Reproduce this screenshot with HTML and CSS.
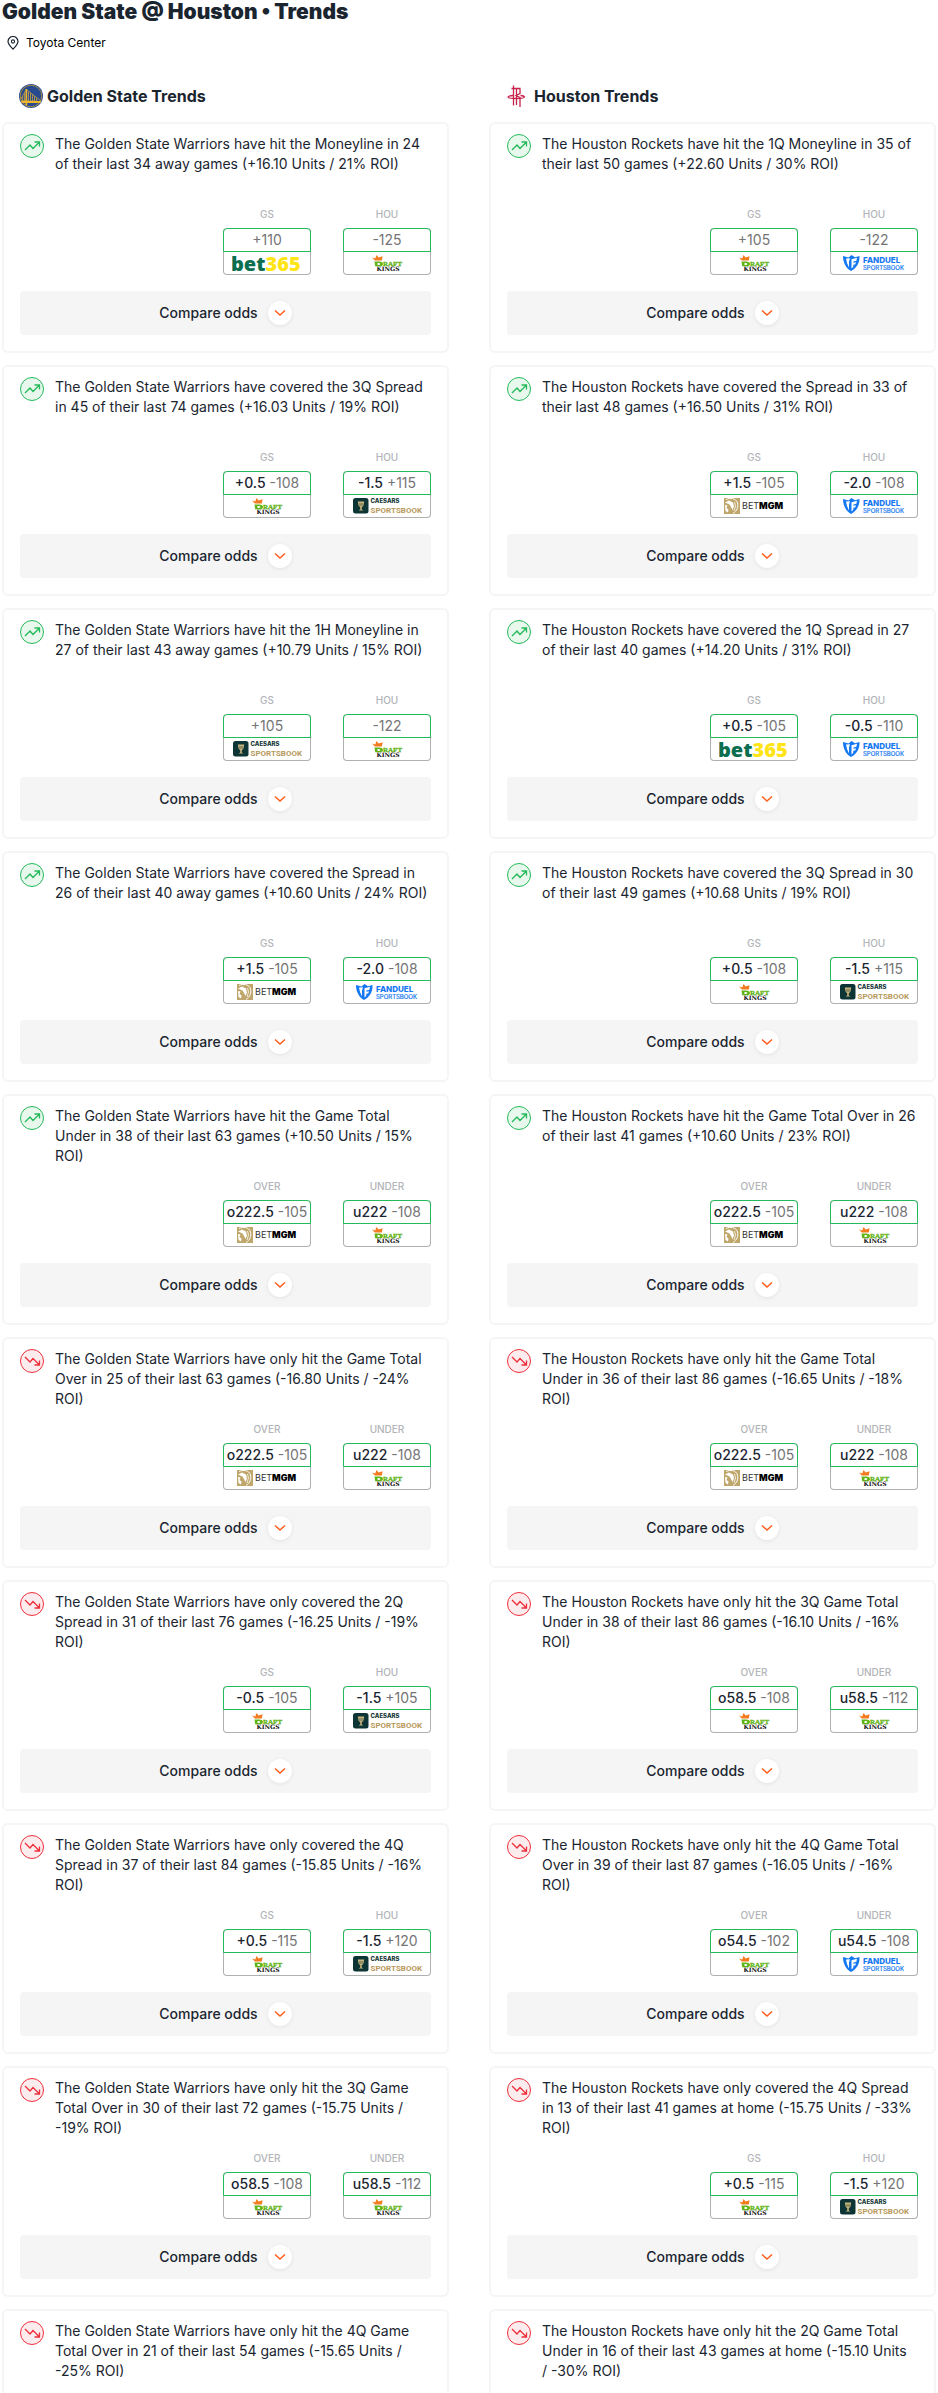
FILE: index.html
```html
<!DOCTYPE html>
<html lang="en">
<head>
<meta charset="utf-8">
<meta name="viewport" content="width=device-width, initial-scale=1">
<title>Golden State @ Houston • Trends</title>
<link rel="stylesheet" href="styles.css">
</head>
<body>
<svg class="sprite" aria-hidden="true">
  <symbol id="up" viewBox="0 0 24 24"><circle cx="12" cy="12" r="11.5" fill="#e8f8ed" stroke="#24b95a"/><path d="M5 16l5-5 3 3.500L19.500 8M14.500 8H19.500V12.500" fill="none" stroke="#24b95a" stroke-width="1.300"/></symbol>
  <symbol id="down" viewBox="0 0 24 24"><circle cx="12" cy="12" r="11.500" fill="#fdecee" stroke="#ec2f3b"/><path d="M5 8l5 5 3-3.500L19.500 16M14.500 16H19.500V11.500" fill="none" stroke="#ec2f3b" stroke-width="1.300"/></symbol>
  <symbol id="chev" viewBox="0 0 12 8"><path d="M1 1.500l5 4.500 5-4.500" fill="none" stroke="#ff5c1a" stroke-width="1.500"/></symbol>
  <symbol id="bet365" viewBox="0 0 70 16"><text x="-1" y="15.500" font-family="Open Sans" font-weight="800" font-size="20" fill="#0b6e4f">bet<tspan fill="#ffe418">365</tspan></text></symbol>
  <symbol id="dk" viewBox="0 0 31 16"><path d="M0 2.500l3.200 1L4.600 0l2 2.500 4-1.300-.8 4.300H2.800z" fill="#f47a1f"/><path d="M2.500 6.500H7c2.800 0 4 1 4 2.500S9.500 11.300 7 11.300H3.200zM5.500 8v2c2 0 2.800-.3 2.800-1S7.500 8 5.500 8z" fill="#5fb416" fill-rule="evenodd"/><text x="11" y="10.800" font-family="Liberation Serif" font-weight="700" font-size="7" fill="#5fb416" stroke="#5fb416" stroke-width=".3">RAFT</text><text x="4.500" y="16" font-family="DejaVu Serif" font-weight="700" font-size="6" fill="#111">KINGS</text></symbol>
  <symbol id="caesars" viewBox="0 0 69 16"><rect width="15.500" height="15.500" rx="2.500" fill="#0d3535"/><path d="M4.800 3.500h6.400l-.8 4.200-1.600 1.500v2.300l1.700 1H5.500l1.700-1V9.200L5.600 7.700z" fill="#c9b57c"/><path d="M7 5v3M9 5v3" stroke="#0d3535" stroke-width=".6"/><text x="17.500" y="5" font-family="Inter" font-weight="800" font-size="6" fill="#143636">CAESARS</text><text x="17.500" y="14.500" font-family="Roboto" font-weight="700" font-size="8" fill="#b89a5c">SPORTSBOOK</text></symbol>
  <symbol id="betmgm" viewBox="0 0 60 16"><rect width="16" height="16" fill="#bfa66a"/><path d="M2 1.500C6-.5 12 0 13.500 5c1 4-.5 8-4.500 10.500" fill="none" stroke="#fff" stroke-width="1"/><path d="M1 4.500L5 2.500l4 2 1 4-1.500 3.500L7 9 5.500 6.500zM1 7l2.500.5-1 2.500 2 1.500-.5 3L1.500 13z" fill="#fff"/><path d="M10.500 4l1 4-1.500 5" fill="none" stroke="#fff" stroke-width=".8"/><text x="18" y="11" font-family="Inter" font-size="9" fill="#333">BET<tspan font-weight="900" fill="#000">MGM</tspan></text></symbol>
  <symbol id="fanduel" viewBox="0 0 62 16"><path d="M0 1l5.500 1.500L8.500 0l3.500 2.200 4.500-1.300c.4 6.300-2.500 12-8.500 15C2.500 13 0 7 0 1z" fill="#1478f2"/><path d="M3 3.500l4-.3-1 3.300v6L4 8zM8.500 4.200l5.500-1.400-.6 2.900-3 .7v1.300l2.600-.5-.8 2.300h-1.700l-.4 2.500-1.600 1.500z" fill="#fff"/><text x="20" y="7.800" font-family="Inter" font-weight="800" font-size="8" fill="#1478f2">FANDUEL</text><text x="20" y="14.500" font-family="Inter" font-size="6" fill="#1478f2" stroke="#1478f2" stroke-width=".2">SPORTSBOOK</text></symbol>
</svg>
<main class="page">
  <h1 class="title">Golden State @ Houston • Trends</h1>
  <p class="venue">
    <svg class="pin" viewBox="0 0 12 14" aria-hidden="true"><path d="M6 13.200C3 10.200 1 8 1 5.500a5 5 0 0 1 10 0c0 2.500-2 4.700-5 7.700z" fill="none" stroke="#1a2530" stroke-width="1.200"/><circle cx="6" cy="5.500" r="1.600" fill="none" stroke="#1a2530" stroke-width="1.100"/></svg>
    Toyota Center
  </p>
  <div class="columns">
    <section class="column">
      <h2 class="team">
        <svg class="team-logo" viewBox="0 0 24 24" aria-hidden="true"><circle cx="12" cy="12" r="12" fill="#26498f"/><circle cx="12" cy="12" r="10.800" fill="none" stroke="#c9a03a" stroke-width=".8"/><path d="M7.300 5.500L22 17M7.300 5.500L2 15M9.500 7.500V18M11.500 9V18M13.500 10.500V18M15.500 12V18M17.500 14v4M5.500 9V18M3.700 12V18" stroke="#c79f3d" stroke-width=".8" fill="none"/><path d="M6.500 5h1.700v16.500H6.500zM2 16.500l20 .5-.5 2H2.500z" fill="#ecb52e"/></svg>
        Golden State Trends
      </h2>
      <article class="card"><div class="trend"><svg class="mark"><use href="#up"/></svg><p>The Golden State Warriors have hit the Moneyline in 24 of their last 34 away games (+16.10 Units / 21% ROI)</p></div>
        <div class="odds"><div class="odd"><span class="side">GS</span><a class="price" href="#"><span class="line"><i>+110</i></span><svg class="book w70" role="img" aria-label="bet365"><use href="#bet365"/></svg></a></div><div class="odd"><span class="side">HOU</span><a class="price" href="#"><span class="line"><i>-125</i></span><svg class="book w31" role="img" aria-label="DraftKings"><use href="#dk"/></svg></a></div></div>
        <button class="compare" type="button">Compare odds<span class="round"><svg class="chev"><use href="#chev"/></svg></span></button></article>
      <article class="card"><div class="trend"><svg class="mark"><use href="#up"/></svg><p>The Golden State Warriors have covered the 3Q Spread in 45 of their last 74 games (+16.03 Units / 19% ROI)</p></div>
        <div class="odds"><div class="odd"><span class="side">GS</span><a class="price" href="#"><span class="line"><b>+0.5</b> <i>-108</i></span><svg class="book w31" role="img" aria-label="DraftKings"><use href="#dk"/></svg></a></div><div class="odd"><span class="side">HOU</span><a class="price" href="#"><span class="line"><b>-1.5</b> <i>+115</i></span><svg class="book w69" role="img" aria-label="Caesars"><use href="#caesars"/></svg></a></div></div>
        <button class="compare" type="button">Compare odds<span class="round"><svg class="chev"><use href="#chev"/></svg></span></button></article>
      <article class="card"><div class="trend"><svg class="mark"><use href="#up"/></svg><p>The Golden State Warriors have hit the 1H Moneyline in 27 of their last 43 away games (+10.79 Units / 15% ROI)</p></div>
        <div class="odds"><div class="odd"><span class="side">GS</span><a class="price" href="#"><span class="line"><i>+105</i></span><svg class="book w69" role="img" aria-label="Caesars"><use href="#caesars"/></svg></a></div><div class="odd"><span class="side">HOU</span><a class="price" href="#"><span class="line"><i>-122</i></span><svg class="book w31" role="img" aria-label="DraftKings"><use href="#dk"/></svg></a></div></div>
        <button class="compare" type="button">Compare odds<span class="round"><svg class="chev"><use href="#chev"/></svg></span></button></article>
      <article class="card"><div class="trend"><svg class="mark"><use href="#up"/></svg><p>The Golden State Warriors have covered the Spread in 26 of their last 40 away games (+10.60 Units / 24% ROI)</p></div>
        <div class="odds"><div class="odd"><span class="side">GS</span><a class="price" href="#"><span class="line"><b>+1.5</b> <i>-105</i></span><svg class="book w60" role="img" aria-label="BetMGM"><use href="#betmgm"/></svg></a></div><div class="odd"><span class="side">HOU</span><a class="price" href="#"><span class="line"><b>-2.0</b> <i>-108</i></span><svg class="book w62" role="img" aria-label="FanDuel"><use href="#fanduel"/></svg></a></div></div>
        <button class="compare" type="button">Compare odds<span class="round"><svg class="chev"><use href="#chev"/></svg></span></button></article>
      <article class="card"><div class="trend"><svg class="mark"><use href="#up"/></svg><p>The Golden State Warriors have hit the Game Total Under in 38 of their last 63 games (+10.50 Units / 15% ROI)</p></div>
        <div class="odds"><div class="odd"><span class="side">OVER</span><a class="price" href="#"><span class="line"><b>o222.5</b> <i>-105</i></span><svg class="book w60" role="img" aria-label="BetMGM"><use href="#betmgm"/></svg></a></div><div class="odd"><span class="side">UNDER</span><a class="price" href="#"><span class="line"><b>u222</b> <i>-108</i></span><svg class="book w31" role="img" aria-label="DraftKings"><use href="#dk"/></svg></a></div></div>
        <button class="compare" type="button">Compare odds<span class="round"><svg class="chev"><use href="#chev"/></svg></span></button></article>
      <article class="card"><div class="trend"><svg class="mark"><use href="#down"/></svg><p>The Golden State Warriors have only hit the Game Total Over in 25 of their last 63 games (-16.80 Units / -24% ROI)</p></div>
        <div class="odds"><div class="odd"><span class="side">OVER</span><a class="price" href="#"><span class="line"><b>o222.5</b> <i>-105</i></span><svg class="book w60" role="img" aria-label="BetMGM"><use href="#betmgm"/></svg></a></div><div class="odd"><span class="side">UNDER</span><a class="price" href="#"><span class="line"><b>u222</b> <i>-108</i></span><svg class="book w31" role="img" aria-label="DraftKings"><use href="#dk"/></svg></a></div></div>
        <button class="compare" type="button">Compare odds<span class="round"><svg class="chev"><use href="#chev"/></svg></span></button></article>
      <article class="card"><div class="trend"><svg class="mark"><use href="#down"/></svg><p>The Golden State Warriors have only covered the 2Q Spread in 31 of their last 76 games (-16.25 Units / -19% ROI)</p></div>
        <div class="odds"><div class="odd"><span class="side">GS</span><a class="price" href="#"><span class="line"><b>-0.5</b> <i>-105</i></span><svg class="book w31" role="img" aria-label="DraftKings"><use href="#dk"/></svg></a></div><div class="odd"><span class="side">HOU</span><a class="price" href="#"><span class="line"><b>-1.5</b> <i>+105</i></span><svg class="book w69" role="img" aria-label="Caesars"><use href="#caesars"/></svg></a></div></div>
        <button class="compare" type="button">Compare odds<span class="round"><svg class="chev"><use href="#chev"/></svg></span></button></article>
      <article class="card"><div class="trend"><svg class="mark"><use href="#down"/></svg><p>The Golden State Warriors have only covered the 4Q Spread in 37 of their last 84 games (-15.85 Units / -16% ROI)</p></div>
        <div class="odds"><div class="odd"><span class="side">GS</span><a class="price" href="#"><span class="line"><b>+0.5</b> <i>-115</i></span><svg class="book w31" role="img" aria-label="DraftKings"><use href="#dk"/></svg></a></div><div class="odd"><span class="side">HOU</span><a class="price" href="#"><span class="line"><b>-1.5</b> <i>+120</i></span><svg class="book w69" role="img" aria-label="Caesars"><use href="#caesars"/></svg></a></div></div>
        <button class="compare" type="button">Compare odds<span class="round"><svg class="chev"><use href="#chev"/></svg></span></button></article>
      <article class="card"><div class="trend"><svg class="mark"><use href="#down"/></svg><p>The Golden State Warriors have only hit the 3Q Game Total Over in 30 of their last 72 games (-15.75 Units / -19% ROI)</p></div>
        <div class="odds"><div class="odd"><span class="side">OVER</span><a class="price" href="#"><span class="line"><b>o58.5</b> <i>-108</i></span><svg class="book w31" role="img" aria-label="DraftKings"><use href="#dk"/></svg></a></div><div class="odd"><span class="side">UNDER</span><a class="price" href="#"><span class="line"><b>u58.5</b> <i>-112</i></span><svg class="book w31" role="img" aria-label="DraftKings"><use href="#dk"/></svg></a></div></div>
        <button class="compare" type="button">Compare odds<span class="round"><svg class="chev"><use href="#chev"/></svg></span></button></article>
      <article class="card"><div class="trend"><svg class="mark"><use href="#down"/></svg><p>The Golden State Warriors have only hit the 4Q Game Total Over in 21 of their last 54 games (-15.65 Units / -25% ROI)</p></div></article>
    </section>
    <section class="column">
      <h2 class="team">
        <svg class="team-logo" viewBox="0 0 24 24" aria-hidden="true"><path d="M5.500 4.500h8.500v5l-4 2 4 2M7.500 1.500v20M10.500 4.500V21M14 13v10" stroke="#c8234b" stroke-width="1.300" fill="none"/><path d="M7 11.500c-3 .2-5 .8-5 1.500 0 1 4 1.500 8 1.500s8.500-.5 8.500-1.500c0-.7-2-1.300-4-1.500" stroke="#c8234b" stroke-width="1.300" fill="none"/></svg>
        Houston Trends
      </h2>
      <article class="card"><div class="trend"><svg class="mark"><use href="#up"/></svg><p>The Houston Rockets have hit the 1Q Moneyline in 35 of their last 50 games (+22.60 Units / 30% ROI)</p></div>
        <div class="odds"><div class="odd"><span class="side">GS</span><a class="price" href="#"><span class="line"><i>+105</i></span><svg class="book w31" role="img" aria-label="DraftKings"><use href="#dk"/></svg></a></div><div class="odd"><span class="side">HOU</span><a class="price" href="#"><span class="line"><i>-122</i></span><svg class="book w62" role="img" aria-label="FanDuel"><use href="#fanduel"/></svg></a></div></div>
        <button class="compare" type="button">Compare odds<span class="round"><svg class="chev"><use href="#chev"/></svg></span></button></article>
      <article class="card"><div class="trend"><svg class="mark"><use href="#up"/></svg><p>The Houston Rockets have covered the Spread in 33 of their last 48 games (+16.50 Units / 31% ROI)</p></div>
        <div class="odds"><div class="odd"><span class="side">GS</span><a class="price" href="#"><span class="line"><b>+1.5</b> <i>-105</i></span><svg class="book w60" role="img" aria-label="BetMGM"><use href="#betmgm"/></svg></a></div><div class="odd"><span class="side">HOU</span><a class="price" href="#"><span class="line"><b>-2.0</b> <i>-108</i></span><svg class="book w62" role="img" aria-label="FanDuel"><use href="#fanduel"/></svg></a></div></div>
        <button class="compare" type="button">Compare odds<span class="round"><svg class="chev"><use href="#chev"/></svg></span></button></article>
      <article class="card"><div class="trend"><svg class="mark"><use href="#up"/></svg><p>The Houston Rockets have covered the 1Q Spread in 27 of their last 40 games (+14.20 Units / 31% ROI)</p></div>
        <div class="odds"><div class="odd"><span class="side">GS</span><a class="price" href="#"><span class="line"><b>+0.5</b> <i>-105</i></span><svg class="book w70" role="img" aria-label="bet365"><use href="#bet365"/></svg></a></div><div class="odd"><span class="side">HOU</span><a class="price" href="#"><span class="line"><b>-0.5</b> <i>-110</i></span><svg class="book w62" role="img" aria-label="FanDuel"><use href="#fanduel"/></svg></a></div></div>
        <button class="compare" type="button">Compare odds<span class="round"><svg class="chev"><use href="#chev"/></svg></span></button></article>
      <article class="card"><div class="trend"><svg class="mark"><use href="#up"/></svg><p>The Houston Rockets have covered the 3Q Spread in 30 of their last 49 games (+10.68 Units / 19% ROI)</p></div>
        <div class="odds"><div class="odd"><span class="side">GS</span><a class="price" href="#"><span class="line"><b>+0.5</b> <i>-108</i></span><svg class="book w31" role="img" aria-label="DraftKings"><use href="#dk"/></svg></a></div><div class="odd"><span class="side">HOU</span><a class="price" href="#"><span class="line"><b>-1.5</b> <i>+115</i></span><svg class="book w69" role="img" aria-label="Caesars"><use href="#caesars"/></svg></a></div></div>
        <button class="compare" type="button">Compare odds<span class="round"><svg class="chev"><use href="#chev"/></svg></span></button></article>
      <article class="card"><div class="trend"><svg class="mark"><use href="#up"/></svg><p>The Houston Rockets have hit the Game Total Over in 26 of their last 41 games (+10.60 Units / 23% ROI)</p></div>
        <div class="odds"><div class="odd"><span class="side">OVER</span><a class="price" href="#"><span class="line"><b>o222.5</b> <i>-105</i></span><svg class="book w60" role="img" aria-label="BetMGM"><use href="#betmgm"/></svg></a></div><div class="odd"><span class="side">UNDER</span><a class="price" href="#"><span class="line"><b>u222</b> <i>-108</i></span><svg class="book w31" role="img" aria-label="DraftKings"><use href="#dk"/></svg></a></div></div>
        <button class="compare" type="button">Compare odds<span class="round"><svg class="chev"><use href="#chev"/></svg></span></button></article>
      <article class="card"><div class="trend"><svg class="mark"><use href="#down"/></svg><p>The Houston Rockets have only hit the Game Total Under in 36 of their last 86 games (-16.65 Units / -18% ROI)</p></div>
        <div class="odds"><div class="odd"><span class="side">OVER</span><a class="price" href="#"><span class="line"><b>o222.5</b> <i>-105</i></span><svg class="book w60" role="img" aria-label="BetMGM"><use href="#betmgm"/></svg></a></div><div class="odd"><span class="side">UNDER</span><a class="price" href="#"><span class="line"><b>u222</b> <i>-108</i></span><svg class="book w31" role="img" aria-label="DraftKings"><use href="#dk"/></svg></a></div></div>
        <button class="compare" type="button">Compare odds<span class="round"><svg class="chev"><use href="#chev"/></svg></span></button></article>
      <article class="card"><div class="trend"><svg class="mark"><use href="#down"/></svg><p>The Houston Rockets have only hit the 3Q Game Total Under in 38 of their last 86 games (-16.10 Units / -16% ROI)</p></div>
        <div class="odds"><div class="odd"><span class="side">OVER</span><a class="price" href="#"><span class="line"><b>o58.5</b> <i>-108</i></span><svg class="book w31" role="img" aria-label="DraftKings"><use href="#dk"/></svg></a></div><div class="odd"><span class="side">UNDER</span><a class="price" href="#"><span class="line"><b>u58.5</b> <i>-112</i></span><svg class="book w31" role="img" aria-label="DraftKings"><use href="#dk"/></svg></a></div></div>
        <button class="compare" type="button">Compare odds<span class="round"><svg class="chev"><use href="#chev"/></svg></span></button></article>
      <article class="card"><div class="trend"><svg class="mark"><use href="#down"/></svg><p>The Houston Rockets have only hit the 4Q Game Total Over in 39 of their last 87 games (-16.05 Units / -16% ROI)</p></div>
        <div class="odds"><div class="odd"><span class="side">OVER</span><a class="price" href="#"><span class="line"><b>o54.5</b> <i>-102</i></span><svg class="book w31" role="img" aria-label="DraftKings"><use href="#dk"/></svg></a></div><div class="odd"><span class="side">UNDER</span><a class="price" href="#"><span class="line"><b>u54.5</b> <i>-108</i></span><svg class="book w62" role="img" aria-label="FanDuel"><use href="#fanduel"/></svg></a></div></div>
        <button class="compare" type="button">Compare odds<span class="round"><svg class="chev"><use href="#chev"/></svg></span></button></article>
      <article class="card"><div class="trend"><svg class="mark"><use href="#down"/></svg><p>The Houston Rockets have only covered the 4Q Spread in 13 of their last 41 games at home (-15.75 Units / -33% ROI)</p></div>
        <div class="odds"><div class="odd"><span class="side">GS</span><a class="price" href="#"><span class="line"><b>+0.5</b> <i>-115</i></span><svg class="book w31" role="img" aria-label="DraftKings"><use href="#dk"/></svg></a></div><div class="odd"><span class="side">HOU</span><a class="price" href="#"><span class="line"><b>-1.5</b> <i>+120</i></span><svg class="book w69" role="img" aria-label="Caesars"><use href="#caesars"/></svg></a></div></div>
        <button class="compare" type="button">Compare odds<span class="round"><svg class="chev"><use href="#chev"/></svg></span></button></article>
      <article class="card"><div class="trend"><svg class="mark"><use href="#down"/></svg><p>The Houston Rockets have only hit the 2Q Game Total Under in 16 of their last 43 games at home (-15.10 Units /&nbsp;-30% ROI)</p></div></article>
    </section>
  </div>
</main>
</body>
</html>
```
FILE: styles.css
```css
* { box-sizing: border-box; }
body { margin: 0; background: #fff; color: #1a2530; font: 14px/20px Inter, sans-serif; }
p, h1, h2 { margin: 0; }
.sprite { display: none; }
.page { height: 100vh; overflow: hidden; padding: 0 2px; }
.title { font-size: 21px; line-height: 24px; font-weight: 900; }
.venue { display: flex; align-items: center; gap: 7px; margin-bottom: 6px; padding: 6px 0 0 5px; height: 32px; color: #000; font-size: 12px; }
.pin { width: 12px; height: 14px; }
.columns { display: grid; grid-template-columns: 1fr 1fr; gap: 40px; }
.column { display: flex; flex-direction: column; gap: 12px; min-width: 0; }
.team { display: flex; align-items: center; gap: 4px; height: 48px; padding: 20px 0 0 17px; font-size: 16px; font-weight: 700; }
.team-logo { width: 24px; height: 24px; }
.card { min-height: 231px; padding: 10px 16px 16px; border: 2px solid #f5f5f5; border-radius: 6px; }
.trend { display: flex; gap: 11px; min-height: 70px; }
.trend p { flex: 1; }
.mark { width: 24px; height: 24px; flex: none; }
.odds { display: flex; justify-content: flex-end; gap: 32px; }
.odd { width: 88px; display: flex; flex-direction: column; gap: 4px; text-align: center; }
.side { font-size: 10px; font-weight: 500; line-height: 20px; color: #b2b4b8; }
.price { display: flex; flex-direction: column; align-items: center; height: 47px; border: 1px solid #b0b0b0; border-top: 0; border-radius: 4px; color: inherit; text-decoration: none; }
.line { align-self: stretch; margin: 0 -1px; height: 24px; line-height: 22px; white-space: nowrap; border: 1px solid #24b95a; border-radius: 4px 4px 0 0; }
.line b { font-weight: 500; }
.line i { font-style: normal; color: #757575; }
.book { height: 16px; margin-top: 3px; }
.w31 { width: 31px; }
.w60 { width: 60px; }
.w62 { width: 62px; }
.w69 { width: 69px; }
.w70 { width: 70px; }
.compare { display: flex; align-items: center; justify-content: center; gap: 10px; width: 100%; height: 44px; margin-top: 16px; padding: 0; border: 0; border-radius: 4px; background: #f5f5f5; color: inherit; font: 500 14px/20px Inter, sans-serif; }
.round { display: flex; align-items: center; justify-content: center; width: 24px; height: 24px; border-radius: 50%; background: #fff; box-shadow: 0 1px 4px rgba(0, 0, 0, .08); }
.chev { width: 12px; height: 8px; }
```
